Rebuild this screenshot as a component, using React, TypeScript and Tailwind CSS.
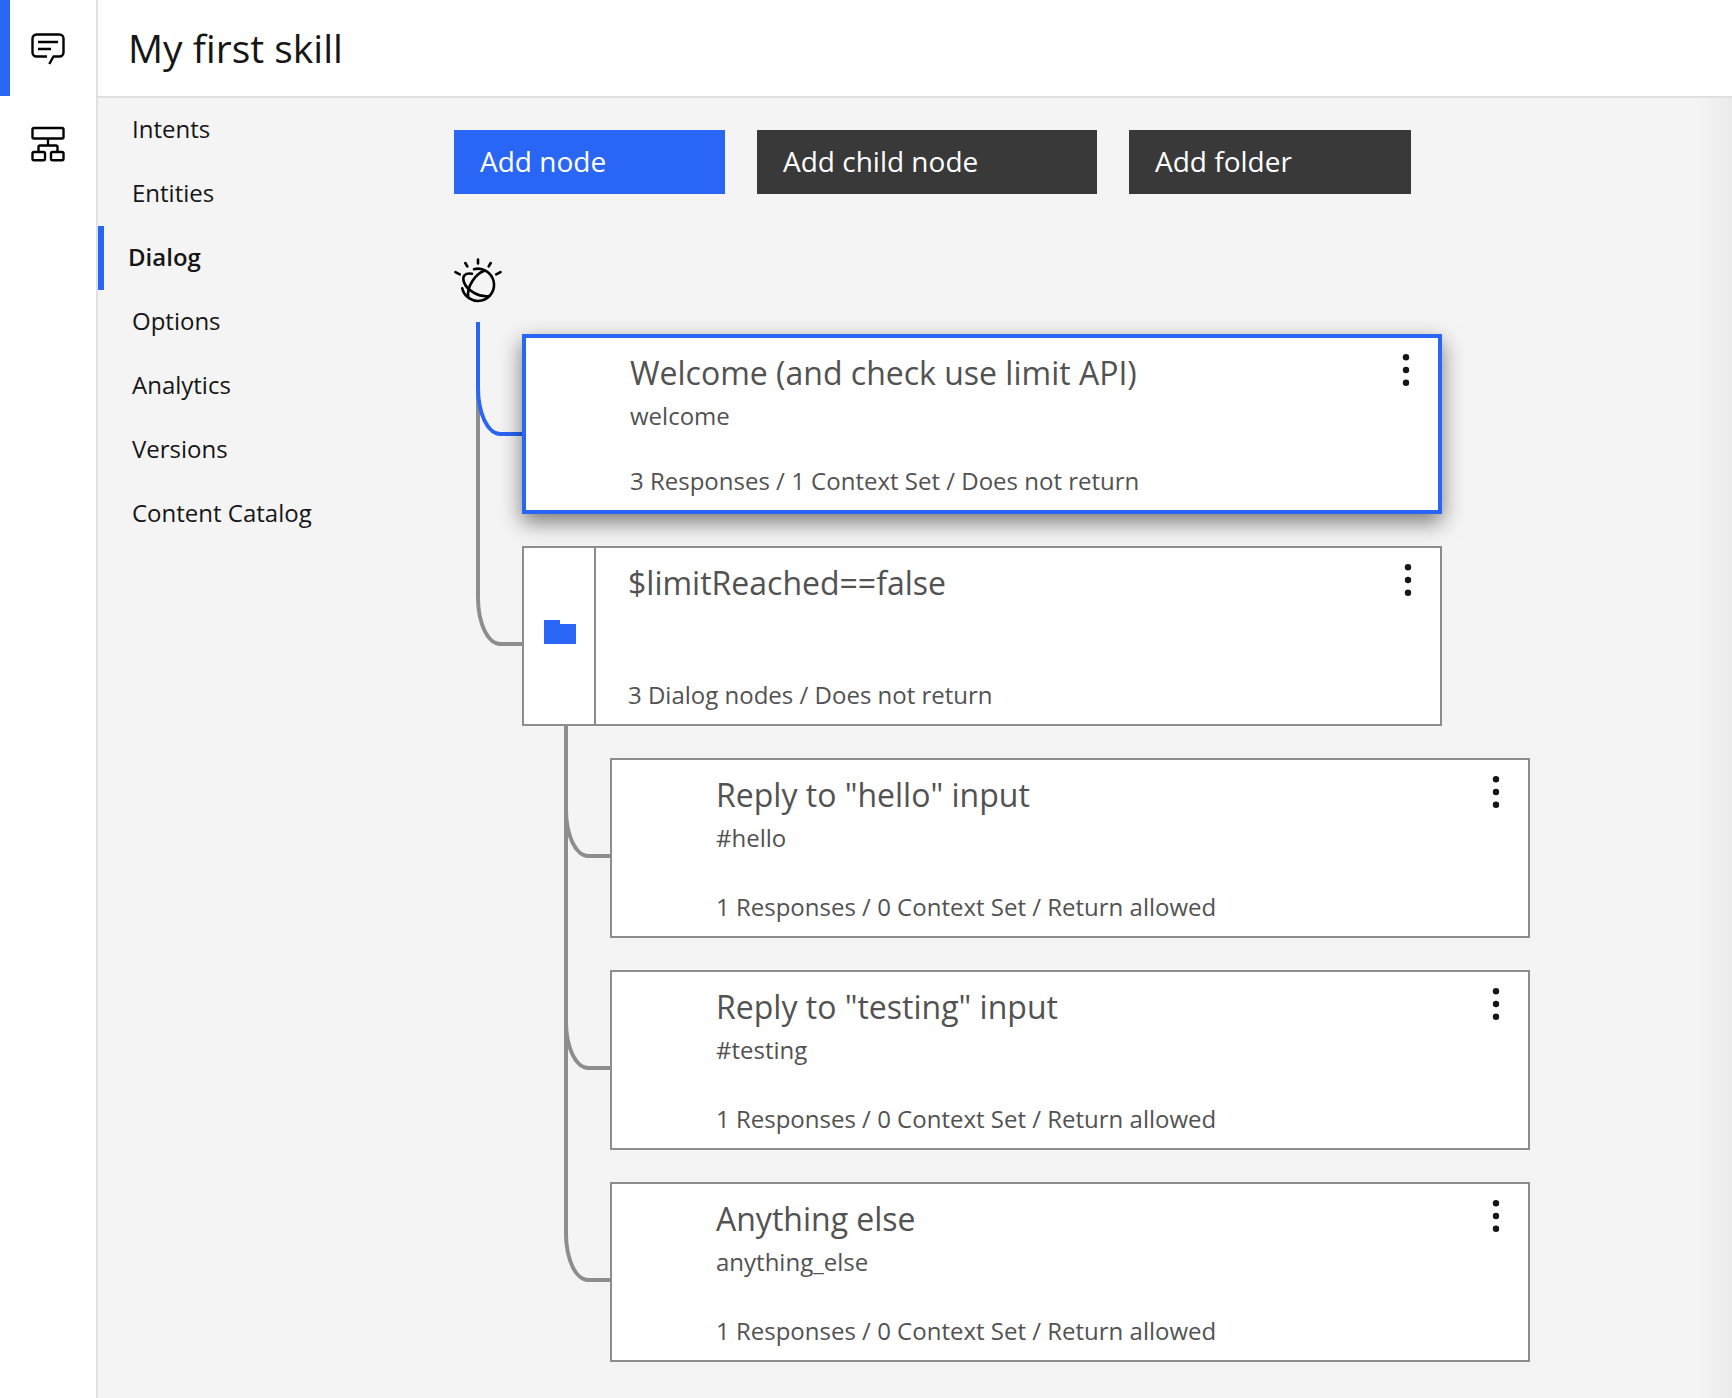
import { clsx } from "clsx";
import type { ReactNode } from "react";

type DialogNode = {
  title: string;
  condition?: string;
  summary: string;
  folder?: boolean;
  selected?: boolean;
  children?: DialogNode[];
};

const sections = ["Intents", "Entities", "Dialog", "Options", "Analytics", "Versions", "Content Catalog"];

const nodes: DialogNode[] = [
  {
    title: "Welcome (and check use limit API)",
    condition: "welcome",
    summary: "3 Responses / 1 Context Set / Does not return",
    selected: true,
  },
  {
    title: "$limitReached==false",
    summary: "3 Dialog nodes / Does not return",
    folder: true,
    children: [
      {
        title: 'Reply to "hello" input',
        condition: "#hello",
        summary: "1 Responses / 0 Context Set / Return allowed",
      },
      {
        title: 'Reply to "testing" input',
        condition: "#testing",
        summary: "1 Responses / 0 Context Set / Return allowed",
      },
      {
        title: "Anything else",
        condition: "anything_else",
        summary: "1 Responses / 0 Context Set / Return allowed",
      },
    ],
  },
];

function ChatIcon() {
  return (
    <svg className="size-10" viewBox="0 0 40 40" fill="none" stroke="#000" strokeWidth="2.4" aria-hidden="true">
      <path d="M19 28.5H8.5a4 4 0 0 1-4-4v-14a4 4 0 0 1 4-4h23a4 4 0 0 1 4 4v14a4 4 0 0 1-4 4h-6L21.3 36" strokeLinejoin="round" />
      <path d="M10 14h20M10 21h13" />
    </svg>
  );
}

function FlowIcon() {
  return (
    <svg className="size-10" viewBox="0 0 40 40" fill="none" stroke="#000" strokeWidth="2.4" aria-hidden="true">
      <rect x="4.5" y="4" width="31" height="10.5" rx="1.5" />
      <rect x="4.5" y="28" width="12.5" height="8.3" rx="1.5" />
      <rect x="23" y="28" width="12.5" height="8.3" rx="1.5" />
      <path d="M20 14.5v7M10.5 28v-5a1.5 1.5 0 0 1 1.5-1.5h16a1.5 1.5 0 0 1 1.5 1.5v5" />
    </svg>
  );
}

function WatsonIcon() {
  return (
    <svg className="size-12" viewBox="0 0 48 48" fill="none" stroke="#000" strokeWidth="2.6" strokeLinecap="round" aria-hidden="true">
      <path d="M24 3.5v4M11.3 7l2 3.4M36.7 7l-2 3.4M1.5 16.2l4.3 2.2M46.5 16.2l-4.3 2.2" />
      <path d="M20 13.2A16.1 16.1 0 1 1 8.2 32.3" />
      <path d="M18 17.8C11.2 16.4 8 20.2 9.9 26C12.6 34 24.5 41.4 35.2 40" />
      <path d="M31 14.6C21.5 17.5 12.6 30.5 14.2 41" />
    </svg>
  );
}

function FolderIcon() {
  return (
    <svg className="h-6 w-8" viewBox="0 0 32 24" fill="#2966f6" aria-hidden="true">
      <path d="M0 0h16v4h16v20H0z" />
    </svg>
  );
}

function MenuIcon() {
  return (
    <svg className="size-10" viewBox="0 0 40 40" fill="#161616" aria-hidden="true">
      <circle cx="20" cy="7.2" r="3.2" />
      <circle cx="20" cy="20" r="3.2" />
      <circle cx="20" cy="32.8" r="3.2" />
    </svg>
  );
}

function NodeCard({ node }: { node: DialogNode }) {
  return (
    <article
      className={clsx(
        "relative flex min-h-[180px] bg-white text-[#525252]",
        node.selected
          ? "border-4 border-[#2966f6] shadow-[0_8px_20px_rgba(0,0,0,0.5)]"
          : "border-2 border-[#8d8d8d]",
      )}
    >
      <div
        className={clsx(
          "flex w-[72px] shrink-0 items-center border-r-2 pb-2 pl-5",
          node.folder ? "border-[#8d8d8d]" : "border-transparent",
        )}
      >
        {node.folder && <FolderIcon />}
      </div>
      <div className="flex min-w-0 flex-1 flex-col pt-[15px] pb-[13px] pl-8">
        <h2 className="text-[32px] leading-10">{node.title}</h2>
        {node.condition && <p className="mt-[7px] text-2xl">{node.condition}</p>}
        <p className="mt-auto text-2xl">{node.summary}</p>
      </div>
      <button type="button" aria-label={`Options for ${node.title}`} className="flex size-16 shrink-0 items-center justify-center">
        <MenuIcon />
      </button>
    </article>
  );
}

function Branch({ nodes, root = false }: { nodes: DialogNode[]; root?: boolean }) {
  return (
    <ul className={clsx("flex w-full flex-col gap-8", root ? "mt-[30px] ml-[68px]" : "mt-8 ml-[88px]")}>
      {nodes.map((node, i) => {
        const top = root && i === 0;
        return (
          <li key={node.title} className="relative w-full">
            {i < nodes.length - 1 && (
              <span className={clsx("absolute bottom-0 -left-[46px] w-1 bg-[#8d8d8d]", top ? "-top-3" : "-top-8")} />
            )}
            <span
              className={clsx(
                "absolute -left-[46px] w-[46px] border-b-4 border-l-4 [border-bottom-left-radius:24px_48px]",
                top ? "-top-3 h-[114px]" : "-top-8 h-[132px]",
                node.selected ? "border-[#2966f6]" : "border-[#8d8d8d]",
              )}
            />
            <NodeCard node={node} />
            {node.children && <Branch nodes={node.children} />}
          </li>
        );
      })}
    </ul>
  );
}

function RailButton({ label, active = false, children }: { label: string; active?: boolean; children: ReactNode }) {
  return (
    <button
      type="button"
      aria-label={label}
      className={clsx(
        "flex h-24 w-full items-center justify-center border-l-[10px] pr-[10px]",
        active ? "border-[#2966f6]" : "border-transparent",
      )}
    >
      {children}
    </button>
  );
}

export default function App() {
  return (
    <div className="flex min-h-screen bg-[#f4f4f4] font-['Open_Sans',sans-serif] text-[#161616]">
      <aside className="w-[98px] shrink-0 border-r-2 border-[#e0e0e0] bg-white">
        <RailButton label="Skills" active>
          <ChatIcon />
        </RailButton>
        <RailButton label="Assistants">
          <FlowIcon />
        </RailButton>
      </aside>
      <div className="flex min-w-0 flex-1 flex-col">
        <header className="flex h-[98px] items-center border-b-2 border-[#e0e0e0] bg-white px-[30px] pb-0.5">
          <h1 className="text-[39px] leading-none">My first skill</h1>
        </header>
        <div className="relative flex flex-1">
          <nav aria-label="Skill sections" className="w-[324px] shrink-0 text-2xl">
            {sections.map((name) => (
              <a
                key={name}
                href="#"
                aria-current={name === "Dialog" ? "page" : undefined}
                className={clsx(
                  "flex h-16 items-center border-l-[6px] pb-0.5",
                  name === "Dialog" ? "border-[#2966f6] pl-6 font-semibold" : "border-transparent pl-7",
                )}
              >
                {name}
              </a>
            ))}
          </nav>
          <main className="min-w-0 flex-1 px-8 pt-8 pb-9">
            <div className="flex gap-8 text-[28px] text-white">
              <button type="button" className="h-16 w-[271px] bg-[#2966f6] px-[26px] pb-0.5 text-left">
                Add node
              </button>
              <button type="button" className="h-16 w-[340px] bg-[#393939] px-[26px] pb-0.5 text-left">
                Add child node
              </button>
              <button type="button" className="h-16 w-[282px] bg-[#393939] px-[26px] pb-0.5 text-left">
                Add folder
              </button>
            </div>
            <div className="mt-[62px]">
              <WatsonIcon />
            </div>
            <div className="w-full max-w-[920px]">
              <Branch nodes={nodes} root />
            </div>
          </main>
          <div className="pointer-events-none absolute inset-y-0 right-0 w-8 bg-linear-to-r from-transparent to-black/4" />
        </div>
      </div>
    </div>
  );
}
